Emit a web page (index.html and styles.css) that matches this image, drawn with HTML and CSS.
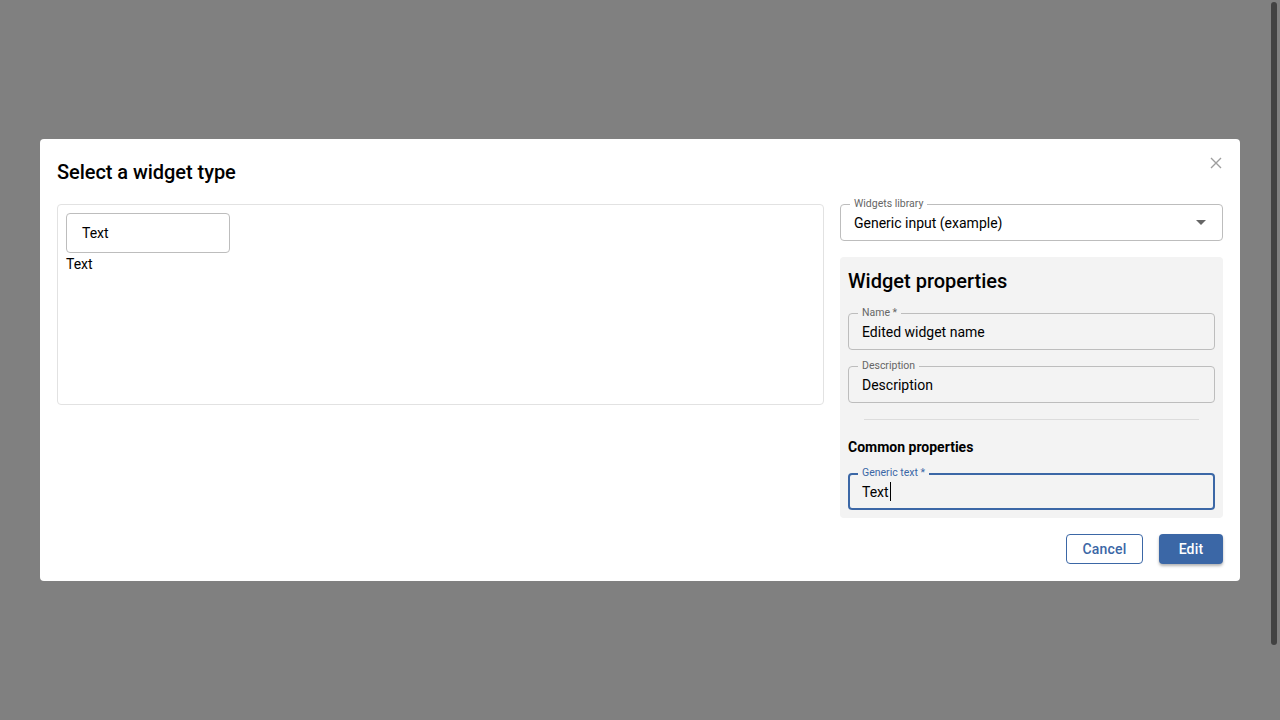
FILE: index.html
```html
<!DOCTYPE html>
<html>
<head>
<meta charset="utf-8">
<link rel="stylesheet" href="styles.css">
</head>
<body>
<div class="backdrop">
  <div class="dialog">
    <button class="close" aria-label="close">
      <svg width="12" height="12" viewBox="0 0 12 12"><path d="M1 1L11 11M11 1L1 11" stroke="#9e9e9e" stroke-width="1.4" fill="none"/></svg>
    </button>
    <h2 class="title">Select a widget type</h2>
    <div class="content">
      <div class="preview">
        <div class="preview-box">Text</div>
        <div class="preview-text">Text</div>
      </div>
      <div class="side">
        <div class="field select">
          <span class="label">Widgets library</span>
          <span class="value">Generic input (example)</span>
          <svg class="arrow" width="10" height="5" viewBox="0 0 10 5"><path d="M0 0L10 0L5 5Z" fill="#666"/></svg>
        </div>
        <div class="props">
          <h3 class="props-title">Widget properties</h3>
          <div class="field grey">
            <span class="label">Name *</span>
            <span class="value">Edited widget name</span>
          </div>
          <div class="field grey">
            <span class="label">Description</span>
            <span class="value">Description</span>
          </div>
          <div class="divider"></div>
          <div class="section">Common properties</div>
          <div class="field grey focused">
            <span class="label">Generic text *</span>
            <span class="value">Text<span class="caret"></span></span>
          </div>
        </div>
      </div>
    </div>
    <div class="actions">
      <button class="btn outline">Cancel</button>
      <button class="btn primary">Edit</button>
    </div>
  </div>
</div>
<div class="scrollbar"><div class="thumb"></div></div>
</body>
</html>
```
FILE: styles.css
```css
* { box-sizing: border-box; }
html, body { margin: 0; padding: 0; }
body {
  font-family: Roboto, "Noto Sans", sans-serif;
  color: #000;
  background: #808080;
  overflow: hidden;
}
.backdrop {
  width: 1280px;
  height: 720px;
  display: flex;
  align-items: center;
  justify-content: center;
}
.dialog {
  position: relative;
  width: 1200px;
  height: 442px;
  background: #fff;
  border-radius: 4px;
  padding: 21px 17px 17px 17px;
  display: flex;
  flex-direction: column;
}
.close {
  position: absolute;
  top: 18px;
  right: 18px;
  width: 12px;
  height: 12px;
  padding: 0;
  border: 0;
  background: none;
  display: flex;
}
.title {
  margin: 0;
  font-size: 20px;
  line-height: 24px;
  font-weight: 500;
  letter-spacing: -0.05px;
}
.content {
  margin-top: 20px;
  display: flex;
  gap: 16px;
  align-items: flex-start;
}
.preview {
  flex: 1;
  height: 201px;
  border: 1px solid #e2e2e2;
  border-radius: 4px;
  padding: 8px;
  font-size: 14px;
}
.preview-box {
  width: 164px;
  height: 40px;
  border: 1px solid #bdbdbd;
  border-radius: 4px;
  padding-left: 15px;
  display: flex;
  align-items: center;
  line-height: 20px;
}
.preview-text {
  line-height: 20px;
  margin-top: 1px;
}
.side {
  width: 383px;
  display: flex;
  flex-direction: column;
  gap: 16px;
}
.field {
  position: relative;
  height: 37px;
  border: 1px solid #bdbdbd;
  border-radius: 4px;
  display: flex;
  align-items: center;
  padding-left: 13px;
  background: #fff;
}
.field .label {
  position: absolute;
  left: 9px;
  top: -8px;
  padding: 0 4px;
  font-size: 10.5px;
  line-height: 14px;
  color: #666;
  background: #fff;
}
.field .value {
  font-size: 14px;
  line-height: 20px;
  color: #000;
}
.field.grey { background: #f3f3f3; }
.field.grey .label { background: #f3f3f3; }
.field.focused {
  border: 2px solid #3b67a6;
  padding-left: 12px;
}
.field.focused .label { color: #3b67a6; left: 8px; top: -9px; }
.caret {
  display: inline-block;
  width: 1px;
  height: 19px;
  background: #000;
  vertical-align: -4px;
  margin-left: 1px;
}
.arrow {
  position: absolute;
  right: 16px;
  top: 15px;
}
.props {
  background: #f3f3f3;
  border-radius: 4px;
  padding: 12px 8px 8px 8px;
  display: flex;
  flex-direction: column;
}
.props-title {
  margin: 0 0 20px 0;
  font-size: 20px;
  line-height: 24px;
  font-weight: 500;
}
.props .field + .field { margin-top: 16px; }
.divider {
  height: 1px;
  background: #dcdcdc;
  margin: 16px 16px 0 16px;
}
.section {
  margin-top: 17px;
  margin-bottom: 16px;
  font-size: 14px;
  line-height: 20px;
  font-weight: 700;
}
.actions {
  margin-top: auto;
  display: flex;
  justify-content: flex-end;
  gap: 16px;
}
.btn {
  height: 30px;
  border-radius: 4px;
  font-family: Roboto, "Noto Sans", sans-serif;
  font-size: 14px;
  font-weight: 500;
  letter-spacing: 0.2px;
  padding: 0;
}
.btn.outline {
  width: 77px;
  background: #fff;
  border: 1px solid #3b67a6;
  color: #3b67a6;
}
.btn.primary {
  width: 64px;
  background: #3b67a6;
  border: 0;
  color: #fff;
  box-shadow: 0 2px 3px rgba(0,0,0,0.3);
}
.scrollbar {
  position: fixed;
  top: 0;
  right: 0;
  width: 15px;
  height: 720px;
}
.thumb {
  position: absolute;
  left: 6px;
  top: 2px;
  width: 6px;
  height: 643px;
  border-radius: 3px;
  background: #424242;
}
```
